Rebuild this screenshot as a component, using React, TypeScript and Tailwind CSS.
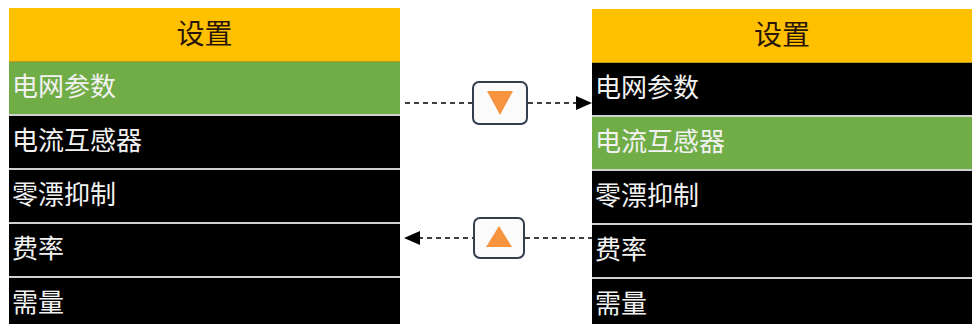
import React from 'react'

const items = ['电网参数', '电流互感器', '零漂抑制', '费率', '需量']

const font = { fontFamily: '"Noto Sans CJK SC", "Noto Sans", sans-serif' }

function MenuPanel({ active, className }: { active: number; className: string }) {
  return <div className={`flex flex-col ${className}`} style={font}>
    <div className="h-[54px] shrink-0 bg-[#ffc000] flex items-center justify-center pb-[6px] border-b border-[#b89a1a]">
      <span className="text-[28px] leading-none text-[#2a1606]">设置</span>
    </div>
    {items.map((item, i) => (
      <div
        key={item}
        className={`h-[54px] shrink-0 flex items-center pl-[3px] pb-[6px] border-b-2 border-[#d0d0d0] ${i === active ? 'bg-[#70ad47]' : 'bg-black'}`}
      >
        <span className="text-[26px] leading-none text-[#f2f2f2]">{item}</span>
      </div>
    ))}
  </div>
}

function Dashes({ width, head }: { width: number; head?: 'left' | 'right' }) {
  return <svg width={width} height="16" viewBox={`0 0 ${width} 16`} className="shrink-0">
    {head === 'left' && <polygon points="0,8 16,1 16,15" fill="#000" />}
    {head === 'right' && <polygon points={`${width},8 ${width - 16},1 ${width - 16},15`} fill="#000" />}
    <line
      x1={head === 'left' ? 14 : 0}
      y1="8"
      x2={head === 'right' ? width - 14 : width}
      y2="8"
      stroke="#000"
      strokeWidth="1.6"
      strokeDasharray="5 4"
    />
  </svg>
}

function KeyBox({ dir, className }: { dir: 'up' | 'down'; className: string }) {
  return <div className={`shrink-0 border-[2.5px] border-[#323f4f] rounded-[7px] bg-[#fbfbfb] flex items-center justify-center ${className}`}>
    <svg width="28" height="26" viewBox="0 0 28 26">
      {dir === 'down'
        ? <polygon points="1,1 27,1 14,25" fill="#f79440" />
        : <polygon points="14,1 27,22 1,22" fill="#f79440" />}
    </svg>
  </div>
}

export default function App() {
  return <div className="w-[972px] h-[324px] overflow-hidden bg-white flex items-start">
    <MenuPanel active={0} className="w-[391px] ml-[9px] mt-[8px] shrink-0" />
    <div className="w-[192px] shrink-0 flex flex-col">
      <div className="flex items-center mt-[81px] h-[44px]">
        <div className="w-[5px] shrink-0" />
        <Dashes width={67} />
        <KeyBox dir="down" className="w-[56px] h-[44px]" />
        <Dashes width={64} head="right" />
      </div>
      <div className="flex items-center mt-[92px] h-[42px]">
        <div className="w-[4px] shrink-0" />
        <Dashes width={69} head="left" />
        <KeyBox dir="up" className="w-[52px] h-[42px]" />
        <Dashes width={67} />
      </div>
    </div>
    <MenuPanel active={1} className="w-[380px] mt-[9px] shrink-0" />
  </div>
}
